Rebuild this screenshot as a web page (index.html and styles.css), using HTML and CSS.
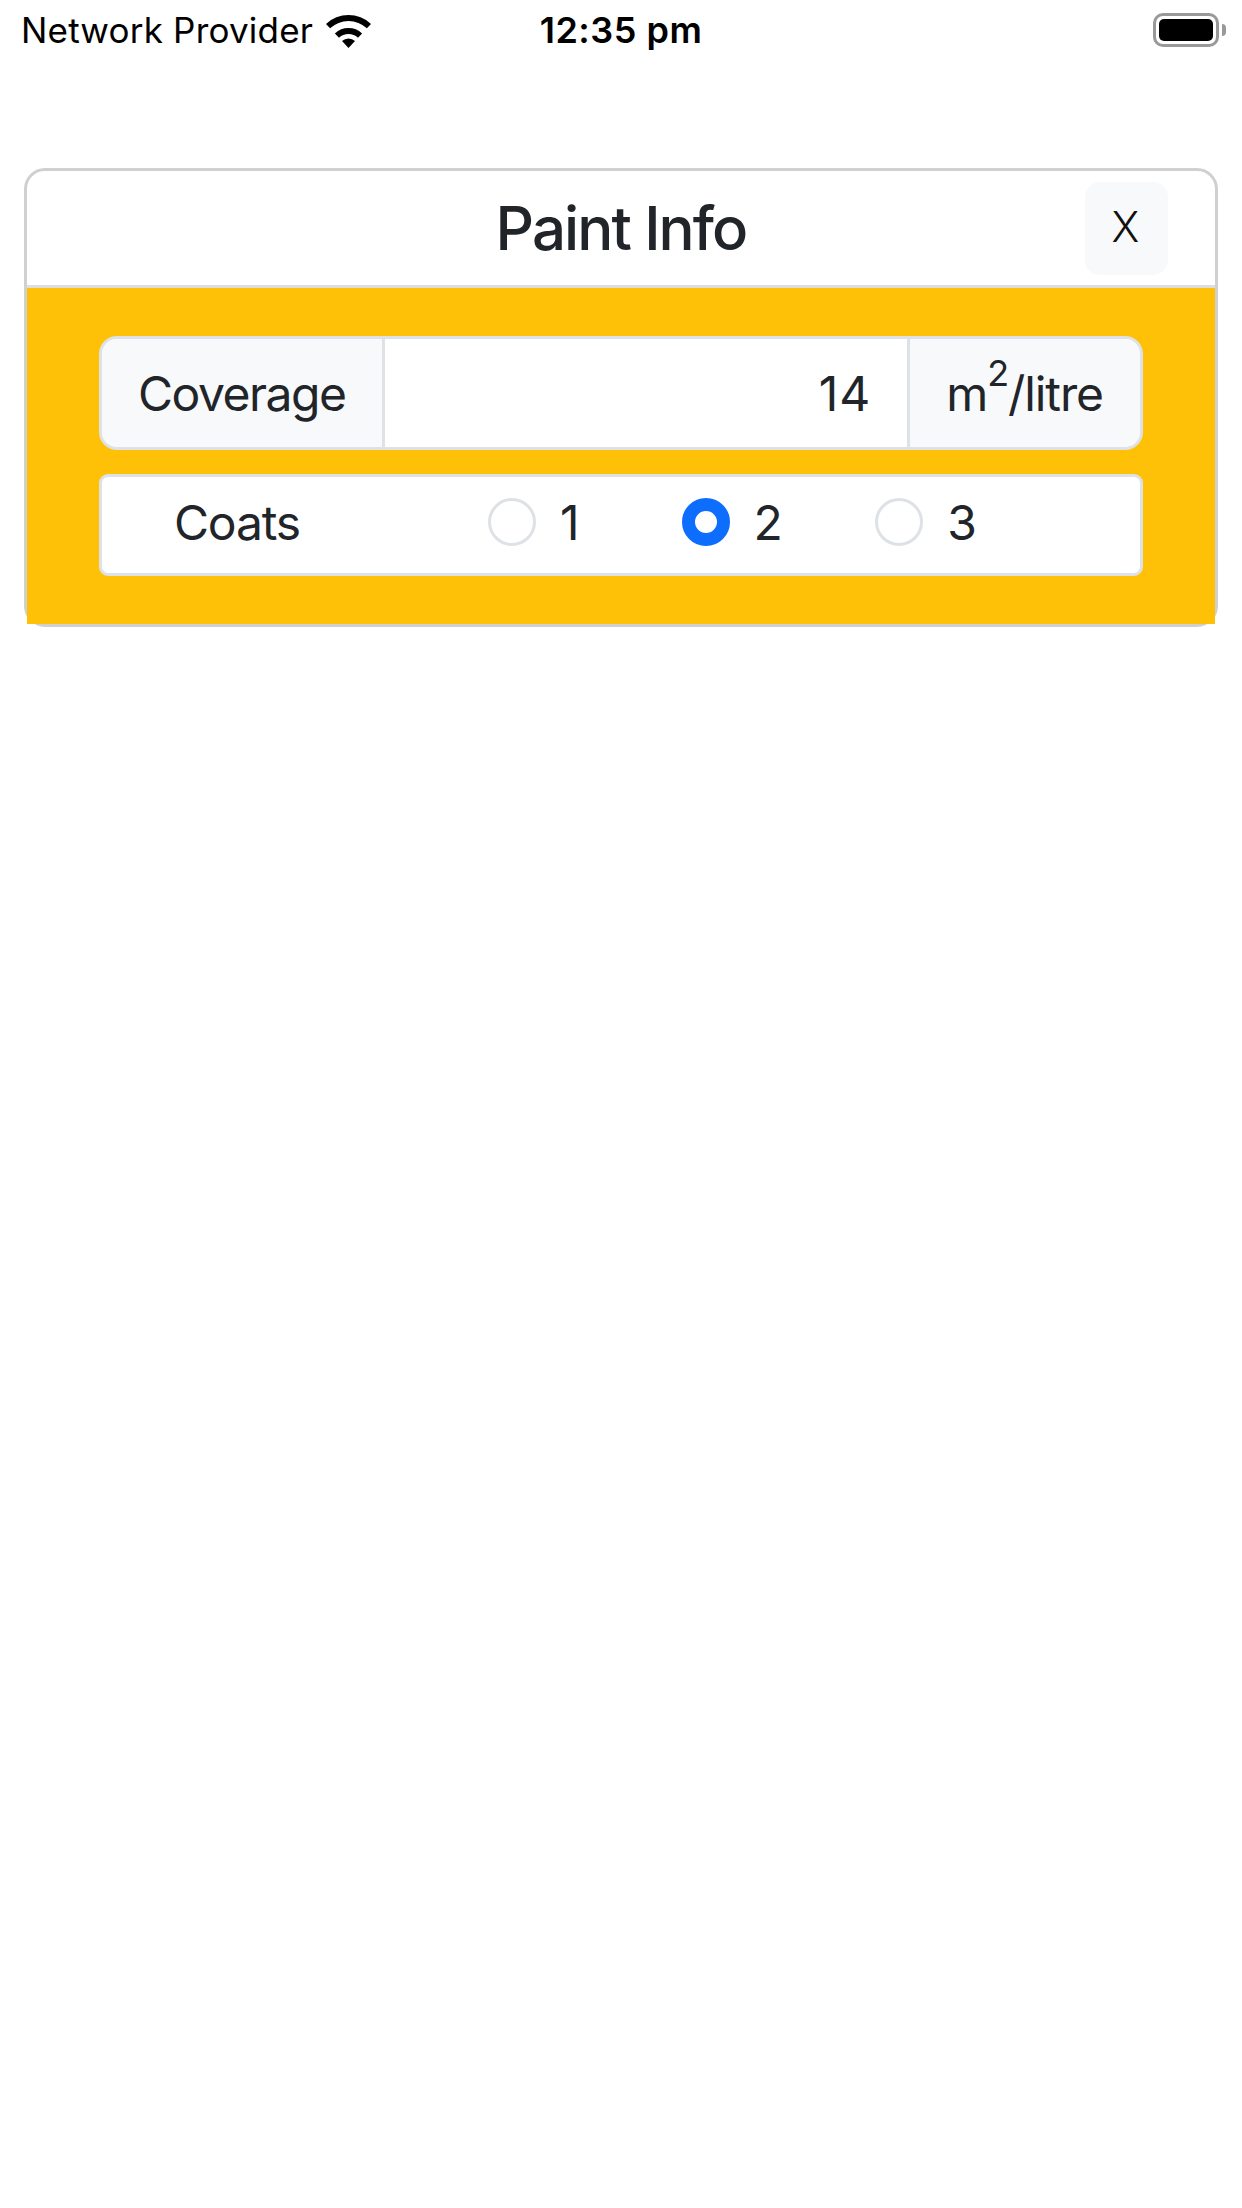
FILE: index.html
```html
<!DOCTYPE html>
<html lang="en">
<head>
<meta charset="utf-8">
<title>Paint Info</title>
<link rel="stylesheet" href="styles.css">
</head>
<body>
<header class="status-bar">
  <div class="status-left">
    <span class="carrier">Network Provider</span>
    <svg class="wifi" viewBox="0 0 45 33" aria-hidden="true">
      <path d="M0 8.9A33 33 0 0 1 45 8.9L40.9 13.3A27 27 0 0 0 4.1 13.3Z"/>
      <path d="M8.9 18.4A20 20 0 0 1 36.1 18.4L32 22.8A14 14 0 0 0 13 22.8Z"/>
      <path d="M16 26.1A9.5 9.5 0 0 1 29 26.1L22.5 33Z"/>
    </svg>
  </div>
  <div class="status-time">12:35 pm</div>
  <div class="status-right">
    <div class="battery"><div class="battery-level"></div></div>
    <div class="battery-cap"></div>
  </div>
</header>
<main class="card">
  <div class="card-header">
    <h1 class="card-title">Paint Info</h1>
    <button class="close-btn" type="button">X</button>
  </div>
  <div class="card-body">
    <div class="input-group">
      <span class="addon addon-start">Coverage</span>
      <div class="value">14</div>
      <span class="addon addon-end">m<sup>2</sup>/litre</span>
    </div>
    <div class="coats">
      <span class="coats-label">Coats</span>
      <label class="option"><input type="radio" name="coats"><span>1</span></label>
      <label class="option"><input type="radio" name="coats" checked><span>2</span></label>
      <label class="option"><input type="radio" name="coats"><span>3</span></label>
    </div>
  </div>
</main>
</body>
</html>
```
FILE: styles.css
```css
* { box-sizing: border-box; }
html, body { margin: 0; padding: 0; background: #fff; }
body {
  width: 1242px;
  min-height: 2208px;
  font-family: Inter, "Noto Sans", sans-serif;
  font-size: 48px;
  letter-spacing: -1.5px;
  color: #212529;
}
.status-bar {
  display: grid;
  grid-template-columns: 1fr auto 1fr;
  align-items: center;
  height: 60px;
  padding: 0 16px 0 21px;
  color: #000;
  letter-spacing: 0;
}
.status-left { display: flex; align-items: center; gap: 13px; }
.carrier { font-size: 35px; line-height: 60px; letter-spacing: 0.2px; }
.wifi { width: 45px; height: 33px; display: block; margin-top: 3px; }
.wifi path { fill: #000; }
.status-time { margin-right: 5px; font-weight: 600; font-size: 36px; line-height: 60px; letter-spacing: 0.5px; }
.status-right { display: flex; align-items: center; justify-content: flex-end; gap: 3px; }
.battery {
  width: 66px;
  height: 34px;
  border: 3px solid #999;
  border-radius: 10px;
  padding: 3px;
}
.battery-level { width: 100%; height: 100%; background: #000; border-radius: 5px; }
.battery-cap {
  width: 4px;
  height: 12px;
  background: #999;
  border-radius: 0 6px 6px 0;
}
.card {
  margin: 108px 24px 0;
  border: 3px solid #d0d0d0;
  border-radius: 21px;
  background: #fff;
}
.card-header {
  display: grid;
  grid-template-columns: 1fr auto 1fr;
  align-items: center;
  height: 117px;
  border-bottom: 3px solid #dedede;
}
.card-title {
  grid-column: 2;
  margin: 0;
  font-size: 60px;
  font-weight: 500;
  letter-spacing: -1.9px;
  line-height: 72px;
}
.close-btn {
  grid-column: 3;
  justify-self: end;
  width: 83px;
  height: 93px;
  margin-right: 47px;
  padding: 0 2px 3px 0;
  border: 0;
  border-radius: 15px;
  background: #f8f9fa;
  color: #111;
  font-family: Inter, sans-serif;
  font-size: 42px;
  font-weight: 300;
}
.card-body {
  display: flex;
  flex-direction: column;
  gap: 24px;
  padding: 48px 72px;
  background: #ffc107;
}
.input-group {
  display: flex;
  height: 114px;
  border: 3px solid #dee2e6;
  border-radius: 18px;
  background: #fff;
  overflow: hidden;
}
.addon {
  display: flex;
  align-items: center;
  padding: 0 36px;
  background: #f8f9fa;
  white-space: pre;
}
.addon sup { font-size: 36px; line-height: 1; align-self: flex-start; margin-top: 16px; }
.addon-start { border-right: 3px solid #dee2e6; padding-right: 37px; }
.addon-end { border-left: 3px solid #dee2e6; padding: 0 37px 0 36px; letter-spacing: -1.1px; }
.value {
  flex: 1;
  display: flex;
  align-items: center;
  justify-content: flex-end;
  padding: 0 36px;
  letter-spacing: 1px;
}
.coats {
  display: flex;
  align-items: center;
  height: 102px;
  padding: 0 0 6px 72px;
  border: 3px solid #dee2e6;
  border-radius: 9px;
  background: #fff;
}
.coats-label { width: 314px; letter-spacing: -1.2px; }
.option { display: flex; align-items: center; gap: 24px; width: 193.6px; }
.option input {
  appearance: none;
  width: 48px;
  height: 48px;
  margin: 0;
  border: 3px solid #dee2e6;
  border-radius: 50%;
  background: #fff;
}
.option input:checked { border: 13px solid #0d6efd; }
```
